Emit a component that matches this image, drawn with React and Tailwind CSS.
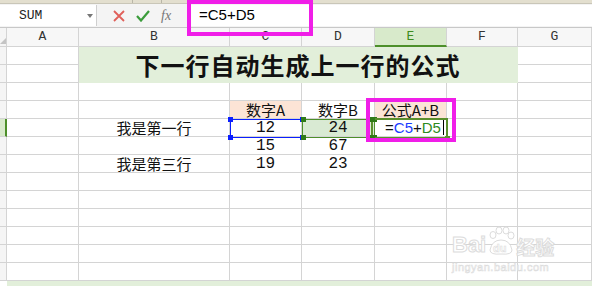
import { useState } from 'react'

const cols = ['A', 'B', 'C', 'D', 'E', 'F', 'G']
const line = 'border-[#d4d4d4]'

function Handle({ className }) {
  return <span className={`absolute w-[5px] h-[5px] ${className}`} />
}

function Cell({ children, className = '' }) {
  return (
    <div className={`h-[18px] border-r border-b ${line} flex items-center justify-center text-[15px] text-[#111] leading-none ${className}`}>
      {children}
    </div>
  )
}

const cn = '"Noto Sans CJK SC", sans-serif'
const mono = '"Liberation Mono", "Noto Sans CJK SC", monospace'

export default function App() {
  const [formula] = useState('=C5+D5')
  const rows = Array.from({ length: 13 }, (_, i) => i + 1)

  const data = {
    4: { C: '数字A', D: '数字B', E: '公式A+B' },
    5: { B: '我是第一行', C: '12', D: '24' },
    6: { C: '15', D: '67' },
    7: { B: '我是第三行', C: '19', D: '23' },
  }

  return (
    <div className="relative w-[592px] h-[286px] overflow-hidden bg-white" style={{ fontFamily: '"Liberation Sans", sans-serif' }}>
      {/* tab strip */}
      <div className="h-[4px] bg-[#e3dfcf] border-b border-[#c9c6b8] flex">
        <div className="w-[133px] border-r border-[#b9b6a8]" />
        <div className="w-[29px] border-r border-[#b9b6a8]" />
      </div>

      {/* formula bar */}
      <div className="h-[24px] bg-[#f4f4f4] border-b border-[#c8c8c8] flex items-center">
        <div className="w-[97px] h-[21px] bg-white border-r border-[#cfcfcf] flex items-center justify-between pl-[19px] pr-[3px]">
          <span className="text-[13px] text-[#222]" style={{ fontFamily: mono }}>SUM</span>
          <span className="w-0 h-0 border-l-[3px] border-r-[3px] border-t-[4px] border-l-transparent border-r-transparent border-t-[#777]" />
        </div>
        <div className="w-[90px] flex items-center gap-[11px] pl-[16px]">
          <svg width="12" height="12" viewBox="0 0 12 12">
            <path d="M1 1 L11 11 M11 1 L1 11" stroke="#e0605a" strokeWidth="1.8" />
          </svg>
          <svg width="14" height="12" viewBox="0 0 14 12">
            <path d="M1 6 L5 10.5 L13 1" stroke="#3b9c3b" strokeWidth="2.2" fill="none" />
          </svg>
          <span className="text-[14px] italic text-[#777]" style={{ fontFamily: '"Liberation Serif", serif' }}>fx</span>
        </div>
        <div className="flex-1 h-[21px] bg-white flex items-center pl-[12px]">
          <span className="text-[15px] text-black">{formula}</span>
        </div>
      </div>

      {/* sheet grid */}
      <div className="grid grid-cols-[7px_72px_151px_72px_73px_72px_71px_74px] grid-rows-[19px] auto-rows-[18px]">
        <div className={`h-[19px] bg-[#f5f5f5] border-r border-b ${line} flex items-end pb-[2px]`}>
          <svg width="6" height="6">
            <path d="M6 0 L6 6 L0 6 Z" fill="#c4c4c4" />
          </svg>
        </div>
        {cols.map((c) => (
          <div
            key={c}
            className={`h-[19px] flex items-center justify-center text-[13px] border-r ${
              c === 'E'
                ? 'bg-[#d8eacb] text-[#3d8a1e] border-b-2 border-b-[#4d8f2a] border-r-[#d4d4d4]'
                : `bg-[#f7f7f7] text-[#333] border-b ${line}`
            }`}
            style={{ fontFamily: mono }}
          >
            {c}
          </div>
        ))}

        {rows.map((r) => (
          <div key={r} className="contents">
            <div
              className={`h-[18px] border-b ${line} ${
                r === 5 ? 'bg-[#d8eacb] border-r-2 border-r-[#4d8f2a]' : `bg-[#f5f5f5] border-r`
              }`}
            />
            {r === 1 && (
              <>
                <Cell />
                <div
                  className="col-span-5 row-span-2 bg-[#e2efda] border-r border-b border-[#e2efda] flex items-center justify-center text-[24px] font-bold text-[#111] tracking-[1px]"
                  style={{ fontFamily: cn }}
                >
                  下一行自动生成上一行的公式
                </div>
                <Cell />
              </>
            )}
            {r === 2 && (
              <>
                <Cell />
                <Cell />
              </>
            )}
            {r > 2 &&
              cols.map((c) => {
                const v = data[r]?.[c]
                const peach = r === 4 && (c === 'C' || c === 'E')
                const green = r === 5 && c === 'D'
                const isNum = v && /^\d+$/.test(v)
                return (
                  <Cell key={c} className={peach ? 'bg-[#fce4d6]' : green ? 'bg-[#d9ead3]' : ''}>
                    {c === 'E' && r === 5 ? (
                      <span className="text-[15px] pl-[8px] flex items-center">
                        =<span className="text-[#1a3cff]">C5</span>+<span className="text-[#2e8b1e]">D5</span>
                        <span className="inline-block w-[1px] h-[15px] bg-black ml-[2px]" />
                      </span>
                    ) : (
                      <span style={{ fontFamily: isNum ? mono : cn }} className={isNum ? 'text-[16px]' : ''}>
                        {v}
                      </span>
                    )}
                  </Cell>
                )
              })}
          </div>
        ))}
      </div>

      {/* bottom strip */}
      <div className="h-[5px] ml-[7px] bg-[#e2efda]" />

      {/* C5 selection */}
      <div className="absolute left-[230px] top-[119px] w-[73px] h-[19px] border border-[#0b1fff]">
        <Handle className="bg-[#0b1fff] -left-[3px] -top-[3px]" />
        <Handle className="bg-[#0b1fff] -right-[3px] -top-[3px]" />
        <Handle className="bg-[#0b1fff] -left-[3px] -bottom-[3px]" />
        <Handle className="bg-[#0b1fff] -right-[3px] -bottom-[3px]" />
      </div>
      {/* D5 reference */}
      <div className="absolute left-[302px] top-[119px] w-[73px] h-[19px] border border-[#4d8f2a]">
        <Handle className="bg-[#2f7a18] -left-[2px] -top-[3px]" />
        <Handle className="bg-[#2f7a18] -right-[3px] -top-[3px]" />
        <Handle className="bg-[#2f7a18] -left-[2px] -bottom-[3px]" />
        <Handle className="bg-[#2f7a18] -right-[3px] -bottom-[3px]" />
      </div>
      {/* E5 active */}
      <div className="absolute left-[371px] top-[118px] w-[77px] h-[21px] border-2 border-[#5a8f2c]">
        <Handle className="bg-[#2f7a18] -left-[3px] -top-[3px]" />
        <Handle className="bg-[#2f7a18] -left-[3px] -bottom-[3px]" />
        <Handle className="bg-[#5a8f2c] -right-[4px] -bottom-[4px]" />
      </div>

      {/* annotation boxes */}
      <div className="absolute left-[187px] top-[0px] w-[126px] h-[36px] border-[4px] border-[#f01ee8]" />
      <div className="absolute left-[366px] top-[98px] w-[90px] h-[44px] border-[4px] border-[#f01ee8]" />

      {/* watermark */}
      <div className="absolute left-[452px] top-[226px] flex flex-col items-start pointer-events-none">
        <div className="flex items-end">
          <span className="text-[22px] leading-none font-bold text-white" style={{ WebkitTextStroke: '1px #dcdcdc' }}>Bai</span>
          <svg width="30" height="30" viewBox="0 0 30 30">
            <g fill="#fff" stroke="#dcdcdc" strokeWidth="1">
              <ellipse cx="7" cy="9" rx="3" ry="3.5" />
              <ellipse cx="13" cy="4.5" rx="3" ry="3.5" />
              <ellipse cx="20" cy="4.5" rx="3" ry="3.5" />
              <ellipse cx="25" cy="9.5" rx="3" ry="3.5" />
              <path d="M4 24 Q6 14 15 14 Q24 14 26 24 Q26 29 15 28 Q4 29 4 24Z" />
            </g>
            <text x="7" y="26" fontSize="11" fontWeight="bold" fill="#fff" stroke="#dcdcdc" strokeWidth="0.6">du</text>
          </svg>
          <span className="text-[19px] leading-none font-bold text-white" style={{ fontFamily: cn, WebkitTextStroke: '1px #dcdcdc' }}>经验</span>
        </div>
        <span className="mt-[6px] text-[11px] leading-none text-white tracking-[0.5px]" style={{ WebkitTextStroke: '0.6px #dcdcdc' }}>jingyan.baidu.com</span>
      </div>
    </div>
  )
}
